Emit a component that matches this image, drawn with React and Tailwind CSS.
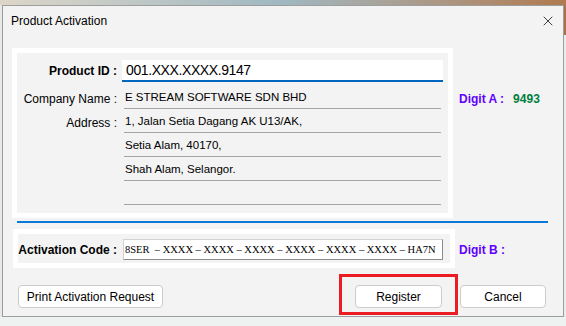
import { X } from "lucide-react";

const sans = { fontFamily: '"Liberation Sans", Arial, sans-serif' };

function InfoRow({ label, value }) {
    return (
        <div className="flex h-[24px]">
            <div className="w-[99px] pt-[3px] flex items-center justify-end whitespace-nowrap text-[12px] text-black">
                {label}
            </div>
            <div className="ml-[7px] w-[317px] pl-[1px] pt-[3px] flex items-center border-b border-[#a3a3a3] whitespace-nowrap text-[11.5px] text-black">
                {value}
            </div>
        </div>
    );
}

export default function App() {
    return (
        <div
            className="w-[566px] h-[326px] bg-[#eef2f0] flex flex-col overflow-hidden"
            style={sans}
        >
            <div className="h-[5px] bg-gradient-to-r from-[#ddd6c8] via-[#9fb8c2] to-[#b07a4e]"></div>

            <div className="flex h-[312px]">
                <div className="w-[2px] bg-[#e6e9e8]"></div>

                <div className="w-[562px] h-[312px] border border-[#9d9d9d] bg-[#f3f3f3] flex flex-col">
                    {/* title bar */}
                    <div className="h-[30px] flex items-center justify-between pl-[8px] pr-[7px]">
                        <span className="text-[12px] text-black">Product Activation</span>
                        <X className="w-[16px] h-[16px] text-black" strokeWidth={1.1} />
                    </div>

                    {/* customer info */}
                    <div className="flex mt-[12px]">
                        <div className="ml-[9px] w-[441px] h-[170px] border-[5px] border-white flex flex-col p-[1px]">
                            <div className="mt-[6px] flex items-center h-[22px]">
                                <div className="w-[99px] text-right whitespace-nowrap text-[12px] font-bold text-black">
                                    Product ID :
                                </div>
                                <div className="ml-[5px] w-[321px] h-[22px] bg-white border-b-[2px] border-[#0067c0] pl-[4px] flex items-center text-[14px] tracking-[-0.4px] text-black">
                                    001.XXX.XXXX.9147
                                </div>
                            </div>
                            <div className="mt-[3px] flex flex-col">
                                <InfoRow label="Company Name :" value="E STREAM SOFTWARE SDN BHD" />
                                <InfoRow label="Address :" value="1, Jalan Setia Dagang AK U13/AK," />
                                <InfoRow label="" value="Setia Alam, 40170," />
                                <InfoRow label="" value="Shah Alam, Selangor." />
                                <InfoRow label="" value="" />
                            </div>
                        </div>

                        <div className="ml-[6px] mt-[37px] h-[24px] pt-[3px] flex items-center gap-[9px] text-[12px] font-bold">
                            <span className="text-[#6100ff]">Digit A :</span>
                            <span className="text-[#00803e]">9493</span>
                        </div>
                    </div>

                    <div className="mt-[3px] ml-[14px] w-[531px] h-[2px] bg-[#0a78d8]"></div>

                    {/* activation code */}
                    <div className="mt-[6px] flex items-center">
                        <div className="ml-[10px] w-[442px] h-[39px] border-[5px] border-white p-[1px] flex items-start">
                            <div className="w-[98px] h-[21px] mt-[4px] flex items-center justify-end whitespace-nowrap text-[12px] font-bold text-black">
                                Activation Code :
                            </div>
                            <div
                                className="ml-[6px] mt-[4px] w-[320px] h-[21px] bg-white border border-[#d4d4d4] border-r-[#8c8c8c] border-b-[#8c8c8c] pl-[1px] flex items-center whitespace-pre overflow-hidden text-[10.5px] text-black"
                                style={{ fontFamily: '"Liberation Serif", "Times New Roman", serif' }}
                            >
                                {"8SER  – XXXX – XXXX – XXXX – XXXX – XXXX – XXXX – HA7N"}
                            </div>
                        </div>
                        <span className="ml-[4px] pt-[3px] text-[12px] font-bold text-[#6100ff]">
                            Digit B :
                        </span>
                    </div>

                    {/* buttons */}
                    <div className="mt-[6px] flex items-start h-[41px]">
                        <button className="ml-[15px] mt-[11px] w-[145px] h-[23px] rounded-[4px] border border-[#cccccc] bg-white text-[12px] text-black">
                            Print Activation Request
                        </button>
                        <div className="ml-[176px] w-[119px] h-[41px] border-[3px] border-[#ec1c24]">
                            <button className="ml-[13px] mt-[8px] w-[87px] h-[23px] rounded-[4px] border border-[#cccccc] bg-white text-[12px] text-black">
                                Register
                            </button>
                        </div>
                        <button className="ml-[2px] mt-[11px] w-[86px] h-[23px] rounded-[4px] border border-[#cccccc] bg-white text-[12px] text-black">
                            Cancel
                        </button>
                    </div>
                </div>

                <div className="w-[2px] flex flex-col">
                    <div className="h-[30px] bg-[#a8714a]"></div>
                    <div className="flex-1 bg-[#e9ecea]"></div>
                </div>
            </div>
        </div>
    );
}
